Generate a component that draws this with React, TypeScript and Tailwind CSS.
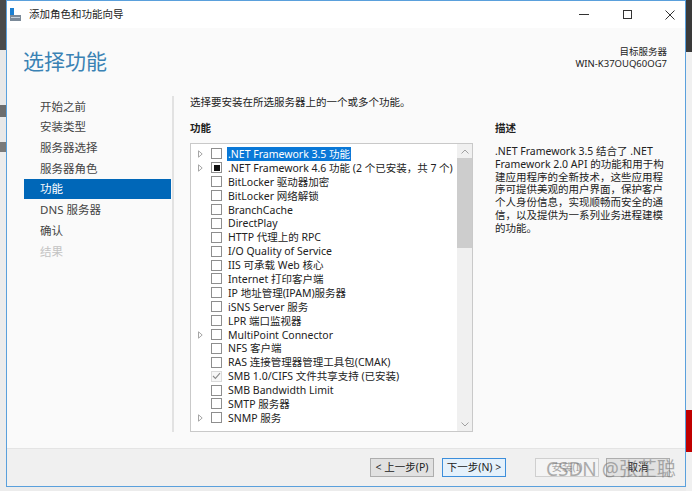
import React from "react";

type Feature = {
  label: string;
  expand?: boolean;
  state?: "none" | "partial" | "installed";
  selected?: boolean;
};

const features: Feature[] = [
  { label: ".NET Framework 3.5 功能", expand: true, selected: true },
  { label: ".NET Framework 4.6 功能 (2 个已安装，共 7 个)", expand: true, state: "partial" },
  { label: "BitLocker 驱动器加密" },
  { label: "BitLocker 网络解锁" },
  { label: "BranchCache" },
  { label: "DirectPlay" },
  { label: "HTTP 代理上的 RPC" },
  { label: "I/O Quality of Service" },
  { label: "IIS 可承载 Web 核心" },
  { label: "Internet 打印客户端" },
  { label: "IP 地址管理(IPAM)服务器" },
  { label: "iSNS Server 服务" },
  { label: "LPR 端口监视器" },
  { label: "MultiPoint Connector", expand: true },
  { label: "NFS 客户端" },
  { label: "RAS 连接管理器管理工具包(CMAK)" },
  { label: "SMB 1.0/CIFS 文件共享支持 (已安装)", state: "installed" },
  { label: "SMB Bandwidth Limit" },
  { label: "SMTP 服务器" },
  { label: "SNMP 服务", expand: true },
];

const steps = ["开始之前", "安装类型", "服务器选择", "服务器角色", "功能", "DNS 服务器", "确认", "结果"];

const descLines = [
  ".NET Framework 3.5 结合了 .NET",
  "Framework 2.0 API 的功能和用于构",
  "建应用程序的全新技术，这些应用程",
  "序可提供美观的用户界面，保护客户",
  "个人身份信息，实现顺畅而安全的通",
  "信，以及提供为一系列业务进程建模",
  "的功能。",
];

const Arrow = () => (
  <svg width="5" height="8" viewBox="0 0 5 8">
    <path d="M0.5 0.8 L4.2 4 L0.5 7.2 Z" fill="none" stroke="#a6a6a6" strokeWidth="1" />
  </svg>
);

const Check = ({ state }: { state?: Feature["state"] }) => {
  if (state === "installed") {
    return (
      <div className="w-[11px] h-[11px] border border-[#dadada] bg-[#f7f7f7] flex items-center justify-center">
        <svg width="9" height="8" viewBox="0 0 9 8">
          <path d="M1 4 L3.4 6.4 L8 1.2" fill="none" stroke="#8c8c8c" strokeWidth="1.1" />
        </svg>
      </div>
    );
  }
  return (
    <div className="w-[11px] h-[11px] border border-[#8e8e8e] bg-white flex items-center justify-center">
      {state === "partial" && <div className="w-[6px] h-[6px] bg-[#111]" />}
    </div>
  );
};

const Btn = ({ children, focus, disabled }: { children: React.ReactNode; focus?: boolean; disabled?: boolean }) => (
  <div
    className={
      "w-[64px] h-[19px] flex items-center justify-center text-[10.5px] border " +
      (focus
        ? "border-[#3c8edb] bg-[#e5f1fb] text-[#222]"
        : disabled
          ? "border-[#cfcfcf] bg-[#f4f4f4] text-[#a8a8a8]"
          : "border-[#adadad] bg-[#e1e1e1] text-[#222]")
    }
  >
    {children}
  </div>
);

export default function App() {
  return (
    <div
      className="relative w-[692px] h-[491px] overflow-hidden bg-[#ececec] flex text-[#333]"
      style={{ fontFamily: '"Noto Sans", "Noto Sans CJK SC", sans-serif' }}
    >
      {/* desktop strip left */}
      <div className="w-[6px] flex flex-col">
        <div className="h-[50px] bg-[#4a4a4a]" />
        <div className="h-[55px] bg-[#e8e8e8]" />
        <div className="h-[12px] bg-[#6d6d6d]" />
        <div className="h-[25px] bg-[#e8e8e8]" />
        <div className="h-[10px] bg-[#7a7a7a]" />
        <div className="flex-1 bg-[#ececec]" />
      </div>

      {/* window */}
      <div className="w-[680px] h-[487px] border border-[#5aa0dc] flex flex-col bg-[#fafafa]">
        {/* title bar */}
        <div className="h-[27px] bg-white flex items-center">
          <div className="ml-[2px] w-[12px] flex justify-center">
            <svg width="12" height="14" viewBox="0 0 12 14">
              <rect x="1" y="0" width="4" height="9" fill="#1b7fd1" />
              <rect x="1" y="7" width="11" height="6" fill="#7b8a99" />
              <rect x="2" y="9" width="9" height="1" fill="#c8d2dc" />
            </svg>
          </div>
          <div className="ml-[8px] text-[10.5px] text-[#222]">添加角色和功能向导</div>
          <div className="ml-auto flex items-center gap-[15px] pr-[1px]">
            <div className="w-[28px] h-[27px] flex items-center justify-center">
              <div className="w-[10px] h-[1px] bg-[#333]" />
            </div>
            <div className="w-[28px] h-[27px] flex items-center justify-center">
              <div className="w-[9px] h-[9px] border border-[#333]" />
            </div>
            <div className="w-[28px] h-[27px] flex items-center justify-center">
              <svg width="10" height="10" viewBox="0 0 10 10">
                <path d="M0.5 0.5 L9.5 9.5 M9.5 0.5 L0.5 9.5" stroke="#333" strokeWidth="1" />
              </svg>
            </div>
          </div>
        </div>

        {/* header */}
        <div className="h-[57px] flex items-start">
          <div className="ml-[16px] mt-[20px] text-[21px] leading-[26px] text-[#3a82b4]">选择功能</div>
          <div className="ml-auto mr-[18px] mt-[18px] flex flex-col items-end text-[9.5px] leading-[12px] text-[#222]">
            <div>目标服务器</div>
            <div>WIN-K37OUQ60OG7</div>
          </div>
        </div>

        {/* main */}
        <div className="flex-1 flex">
          <div className="w-[165px] pl-[17px] pt-[11px] flex flex-col">
            {steps.map((s) => (
              <div
                key={s}
                className={
                  "w-[147px] h-[20.7px] pl-[16px] flex items-center text-[11.5px] " +
                  (s === "功能" ? "bg-[#0067b8] text-white" : s === "结果" ? "text-[#c3c3c3]" : "text-[#444]")
                }
              >
                {s}
              </div>
            ))}
          </div>
          <div className="w-[2px] mt-[11px] mb-[16px] bg-[#e2e2e2]" />

          <div className="ml-[16px] pt-[10px] flex flex-col">
            <div className="text-[10.5px] leading-[14px] text-[#222]">选择要安装在所选服务器上的一个或多个功能。</div>
            <div className="mt-[12px] flex gap-[22px]">
              <div className="w-[283px] flex flex-col">
                <div className="text-[10.5px] leading-[14px] font-bold text-[#222]">功能</div>
                <div className="mt-[8px] h-[289px] border border-[#c9c9c9] bg-white flex">
                  <div className="flex-1 pt-[3px] flex flex-col">
                    {features.map((f) => (
                      <div key={f.label} className="h-[13.9px] pl-[7px] flex items-center">
                        <div className="w-[7px] flex items-center">{f.expand && <Arrow />}</div>
                        <div className="ml-[6px]">
                          <Check state={f.state} />
                        </div>
                        <div
                          className={
                            "ml-[5px] px-[1px] text-[10.5px] leading-[14px] whitespace-nowrap " +
                            (f.selected ? "bg-[#0a78d7] text-white" : "text-[#222]")
                          }
                        >
                          {f.label}
                        </div>
                      </div>
                    ))}
                  </div>
                  <div className="w-[15px] bg-[#f0f0f0] flex flex-col">
                    <div className="h-[14px] flex items-center justify-center">
                      <svg width="8" height="5" viewBox="0 0 8 5">
                        <path d="M0.5 4.5 L4 1 L7.5 4.5" fill="none" stroke="#a0a0a0" strokeWidth="1" />
                      </svg>
                    </div>
                    <div className="h-[90px] bg-[#cdcdcd]" />
                    <div className="flex-1" />
                    <div className="h-[14px] flex items-center justify-center">
                      <svg width="8" height="5" viewBox="0 0 8 5">
                        <path d="M0.5 0.5 L4 4 L7.5 0.5" fill="none" stroke="#a0a0a0" strokeWidth="1" />
                      </svg>
                    </div>
                  </div>
                </div>
              </div>
              <div className="w-[178px] flex flex-col">
                <div className="text-[10.5px] leading-[14px] font-bold text-[#222]">描述</div>
                <div className="mt-[10px] text-[10.5px] leading-[12.8px] text-[#222]">
                  {descLines.map((l) => (
                    <div key={l} className="whitespace-nowrap">
                      {l}
                    </div>
                  ))}
                </div>
              </div>
            </div>
          </div>
        </div>

        {/* footer */}
        <div className="h-[38px] border-t border-[#e4e4e4] bg-[#f0f0f0] flex items-center justify-end pr-[15px]">
          <Btn>&lt; 上一步(P)</Btn>
          <div className="ml-[8px]">
            <Btn focus>下一步(N) &gt;</Btn>
          </div>
          <div className="ml-[29px]">
            <Btn disabled>安装(I)</Btn>
          </div>
          <div className="ml-[7px]">
            <Btn>取消</Btn>
          </div>
        </div>
      </div>

      {/* desktop strip right */}
      <div className="w-[6px] flex flex-col">
        <div className="h-[52px] bg-[#3a3a3a]" />
        <div className="h-[358px] bg-[#f0f0f0]" />
        <div className="h-[42px] bg-[#c00000]" />
        <div className="flex-1 bg-[#f0f0f0]" />
      </div>

      {/* watermark */}
      <div className="absolute left-[546px] top-[456px] text-[19px] leading-[26px] text-[#7a7a7a] opacity-60 whitespace-nowrap">
        CSDN @张芷聪
      </div>
    </div>
  );
}
